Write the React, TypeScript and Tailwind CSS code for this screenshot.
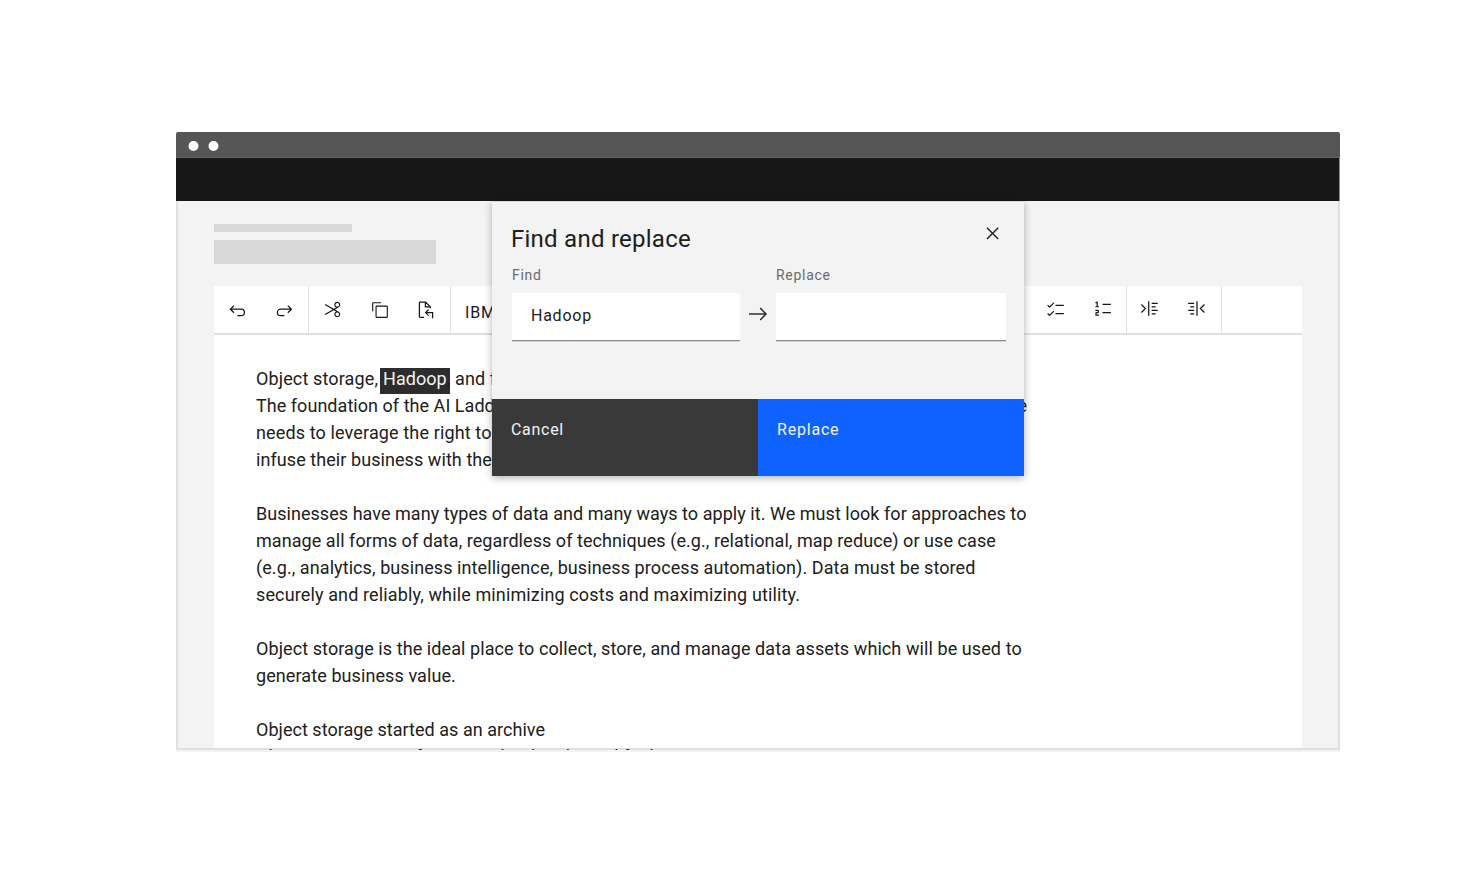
import type { ReactNode } from "react";

function Icon({ size, className = "", children }: { size: number; className?: string; children: ReactNode }) {
  return (
    <svg width={size} height={size} viewBox="0 0 32 32" fill="currentColor" className={`shrink-0 ${className}`}>
      {children}
    </svg>
  );
}

function LineIcon({ className = "", children }: { className?: string; children: ReactNode }) {
  return (
    <svg
      width={20}
      height={20}
      viewBox="0 0 20 20"
      fill="none"
      stroke="currentColor"
      strokeWidth={1.25}
      className={`shrink-0 ${className}`}
    >
      {children}
    </svg>
  );
}

function Slot({ children }: { children: ReactNode }) {
  return <button className="flex h-full w-[46.5px] items-center justify-center">{children}</button>;
}

function Toolbar() {
  return (
    <div className="flex h-[49px] border-b-2 border-[#e0e0e0] bg-white text-[#171717]">
      <div className="flex h-full w-[95px] border-r border-[#e0e0e0]">
        <Slot>
          <LineIcon>
            <path d="M7 5.6 3.4 9.2 7 12.8M3.6 9.2h10.6a3.2 3.2 0 0 1 0 6.4h-3.8" />
          </LineIcon>
        </Slot>
        <Slot>
          <LineIcon>
            <path d="M13.8 5.6 17.4 9.2l-3.6 3.6M17.2 9.2H6.6a3.2 3.2 0 0 0 0 6.4h3.8" />
          </LineIcon>
        </Slot>
      </div>
      <div className="flex h-full w-[142px] border-r border-[#e0e0e0] pl-[0.5px]">
        <Slot>
          <Icon size={19}>
            <path d="M26.5 19.63 20.24 16l6.26-3.63a5 5 0 0 0-1.21-9.2A5.19 5.19 0 0 0 24 3a5 5 0 0 0-4.33 7.53 5 5 0 0 0 2.39 2.1l-3.82 2.21L4 6.6 3 8.34 16.24 16 3 23.68l1 1.74 14.24-8.26 3.82 2.21a5 5 0 0 0-2.39 2.1A5 5 0 0 0 24 29a5.19 5.19 0 0 0 1.29-.17 5 5 0 0 0 1.21-9.2ZM21.4 9.5a3 3 0 0 1 1.1-4.1 3 3 0 0 1 1.5-.4 3 3 0 1 1-2.6 4.5ZM22.5 26.6a3 3 0 1 1 4.1-1.1 3 3 0 0 1-4.1 1.1Z" />
          </Icon>
        </Slot>
        <Slot>
          <Icon size={18} className="ml-px mt-px">
            <path d="M28 10V28H10V10H28m0-2H10a2 2 0 0 0-2 2V28a2 2 0 0 0 2 2H28a2 2 0 0 0 2-2V10a2 2 0 0 0-2-2Z" />
            <path d="M4 18H2V4A2 2 0 0 1 4 2H18V4H4Z" />
          </Icon>
        </Slot>
        <Slot>
          <LineIcon>
            <path d="M8 17.4H4.2a.8.8 0 0 1-.8-.8V2.9a.8.8 0 0 1 .8-.8h5.4l4.6 4.6v1.6M9.4 2.1v4.8h4.8M12.6 9.6 9.6 12.6l3 3M9.8 12.6h6.8v5.6" />
          </LineIcon>
        </Slot>
      </div>
      <div className="flex h-full w-[575px] items-center whitespace-nowrap pl-[14px] pt-[6px] text-base tracking-[0.8px]">
        IBM
      </div>
      <div className="flex h-full w-[101px] border-r border-[#e0e0e0] pl-[6px]">
        <Slot>
          <Icon size={19} className="-mt-px">
            <path d="M16 8H30V10H16zM16 22H30V24H16zM6 10.59 3.41 8 2 9.41 6 13.41 14 5.41 12.59 4zM6 24.59 3.41 22 2 23.41 6 27.41 14 19.41 12.59 18z" />
          </Icon>
        </Slot>
        <Slot>
          <Icon size={19} className="-mt-[3px] ml-px">
            <path d="M16 22H30V24H16zM16 8H30V10H16zM8 12V4H6V5H4v2h2v5H4v2h6v-2zM10 28H4V24a2 2 0 0 1 2-2H8V20H4V18H8a2 2 0 0 1 2 2v2a2 2 0 0 1-2 2H6v2h4z" />
          </Icon>
        </Slot>
      </div>
      <div className="flex h-full w-[95px] border-r border-[#e0e0e0]">
        <Slot>
          <LineIcon className="-mt-[3px]">
            <path d="m1.4 6.5 4 4-4 4M8.7 3.3v14.4M11.7 5.3h6M11.7 8.8h4M11.7 12.3h6M11.7 15.8h4" />
          </LineIcon>
        </Slot>
        <Slot>
          <LineIcon className="-mt-[3px]">
            <path d="m17.4 6.5-4 4 4 4M10 3.3v14.4M1.2 5.3h6M3.2 8.8h4M1.2 12.3h6M3.2 15.8h4" />
          </LineIcon>
        </Slot>
      </div>
    </div>
  );
}

function Document() {
  return (
    <div className="h-[415px] w-[860px] overflow-hidden whitespace-nowrap pl-[42px] pt-[30px] text-lg leading-[27px] text-[#202020]">
      <p className="flex h-[27px]">
        <span className="w-[124px] tracking-[0.13px]">Object storage,</span>
        <span className="mt-[3px] h-[26px] w-[70px] bg-[#2d2d2d] pl-[3px] leading-[21px] tracking-[0.05px]">
          <span className="text-[#f3f3f3]">Hadoop</span>,
        </span>
        <span className="pl-[5px] tracking-[0.1px]">and f</span>
      </p>
      <p className="flex w-[771px] justify-between tracking-[0.04px]">
        <span>The foundation of the AI Ladd</span>
        <span>e</span>
      </p>
      <p className="tracking-[0.13px]">needs to leverage the right to</p>
      <p className="tracking-[0.07px]">infuse their business with the</p>
      <br />
      <p className="tracking-[0.042px]">
        Businesses have many types of data and many ways to apply it. We must look for approaches to
      </p>
      <p className="tracking-[0.06px]">
        manage all forms of data, regardless of techniques (e.g., relational, map reduce) or use case
      </p>
      <p className="tracking-[0.08px]">
        (e.g., analytics, business intelligence, business process automation). Data must be stored
      </p>
      <p className="tracking-[0.13px]">securely and reliably, while minimizing costs and maximizing utility.</p>
      <br />
      <p className="tracking-[0.085px]">
        Object storage is the ideal place to collect, store, and manage data assets which will be used to
      </p>
      <p className="tracking-[0.09px]">generate business value.</p>
      <br />
      <p className="tracking-[0.03px]">Object storage started as an archive</p>
      <p className="tracking-[0.07px]">Object storage was first ever cloud and simplified many areas across a company</p>
    </div>
  );
}

function Field({ label, value, className }: { label: string; value: string; className: string }) {
  return (
    <label className={`block ${className}`}>
      <span className="block h-[27px] text-sm leading-[19px] tracking-[0.72px] text-[#6a6a6a]">{label}</span>
      <span className="flex h-12 items-center border-b border-[#8d8d8d] bg-white pb-px pl-[19px] text-base tracking-[0.75px] shadow-[0_1px_0_#d4d4d4]">
        {value}
      </span>
    </label>
  );
}

function FindReplaceDialog() {
  return (
    <section
      role="dialog"
      className="absolute left-[316px] top-[69px] z-20 flex h-[275px] w-[532px] flex-col border-t border-[#d8d8d8] bg-[#f3f3f3] text-[#202020] shadow-[0_2px_8px_rgba(0,0,0,0.3)]"
    >
      <header className="flex h-16 justify-between pl-[19px] pr-[20px]">
        <h2 className="pt-[19px] text-2xl leading-9 tracking-[0.25px]">Find and replace</h2>
        <button className="mt-[19px] h-6 w-6">
          <svg width="24" height="24" viewBox="0 0 24 24" fill="none" stroke="currentColor" strokeWidth="1.4">
            <path d="m7 6.7 11.2 11.2M18.2 6.7 7 17.9" />
          </svg>
        </button>
      </header>
      <div className="flex flex-1 pl-5">
        <Field label="Find" value="Hadoop" className="w-[228px]" />
        <div className="w-9 pl-2 pt-[38px]">
          <svg width="20" height="20" viewBox="0 0 20 20" fill="none" stroke="currentColor" strokeWidth="1.4">
            <path d="M1 10h16.6" />
            <path d="m12.2 4.1 5.9 5.9-5.9 5.9" />
          </svg>
        </div>
        <Field label="Replace" value="" className="w-[230px]" />
      </div>
      <footer className="grid h-[77px] grid-cols-2 text-base leading-6 text-[#f3f3f3]">
        <button className="bg-[#393939] pb-[15px] pl-[19px] text-left tracking-[0.7px]">Cancel</button>
        <button className="bg-[#0f62fe] pb-[15px] pl-[19px] text-left tracking-[0.8px]">Replace</button>
      </footer>
    </section>
  );
}

export default function App() {
  return (
    <main className="h-[884px] w-[1472px] overflow-hidden bg-white pl-[176px] pt-[132px] font-['Roboto','Liberation_Sans',sans-serif]">
      <div className="relative w-[1164px]">
        <div className="flex h-[26px] items-center border-b border-[#686868] bg-[#565656] pl-3 pt-[2px] rounded-t-[2px]">
          <svg width="32" height="12" viewBox="0 0 32 12" fill="#fff">
            <circle cx="5.5" cy="6" r="5" />
            <circle cx="25.5" cy="6" r="5" />
          </svg>
        </div>
        <div className="h-[43px] border-r border-[#8a8a8a] bg-[#171717]" />
        <div className="h-[549px] border-x-2 border-b-2 border-[#e0e0e0] bg-[#f3f3f3] px-9 pt-[23px] shadow-[0_2px_0_#f3f3f3]">
          <div className="h-2 w-[138px] bg-[#d8d8d8]" />
          <div className="mt-2 h-6 w-[222px] bg-[#d8d8d8]" />
          <div className="mt-[22px] h-[462px] w-[1088px] bg-white">
            <Toolbar />
            <Document />
          </div>
        </div>
        <FindReplaceDialog />
      </div>
    </main>
  );
}
